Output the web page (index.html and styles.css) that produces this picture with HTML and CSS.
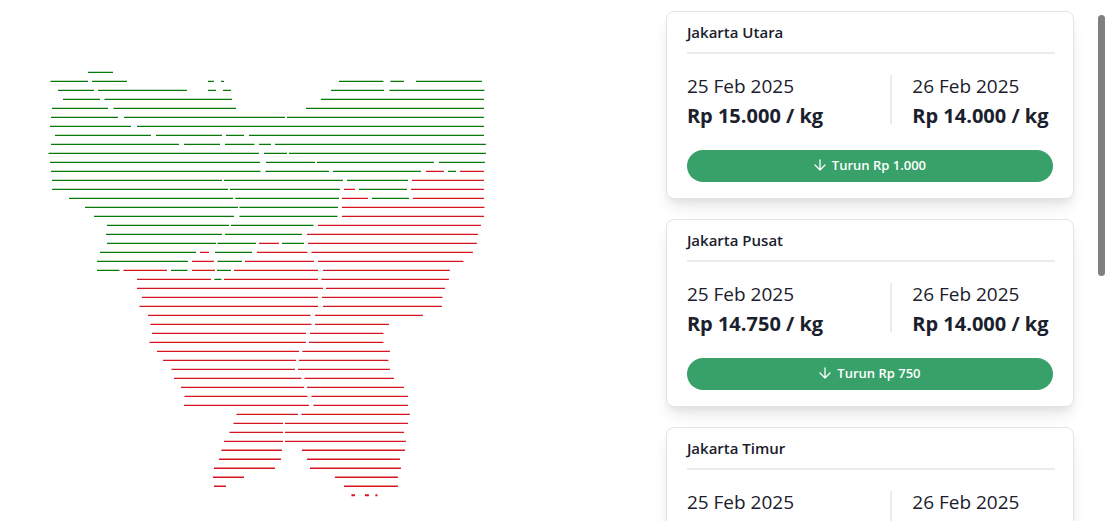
FILE: index.html
```
<!DOCTYPE html>
<html lang="id">
<head>
    <meta charset="UTF-8">
    <meta name="viewport" content="width=device-width, initial-scale=1.0">
    <title>Harga per Wilayah</title>
    <link rel="stylesheet" href="styles.css">
</head>
<body>

    <main class="page">
        <div class="map">
            <svg viewBox="0 0 666 521" role="img" aria-label="Peta Jakarta">
                <g transform="scale(1 .9997)">
                    <path class="area-down" d="M88 72.5H113
                        M50.5 81.5H88M92 81.5H127M208 81.5H214M221 81.5H224M339 81.5H383.5M390.5 81.5H404M416 81.5H482
                        M58 90.5H94M98 90.5H187M208 90.5H216M223 90.5H231M331 90.5H384M389.5 90.5H484.5
                        M63 99.5H100M104.5 99.5H232M321 99.5H484
                        M52 108.5H108M113.5 108.5H236M306 108.5H484
                        M51 117.5H118M124 117.5H285M287 117.5H484
                        M50 126.5H131M137 126.5H484
                        M55 135.5H151M156 135.5H222M226 135.5H244M249 135.5H484
                        M51 144.5H179M184 144.5H220M225 144.5H254.5M259 144.5H271M275 144.5H486
                        M48.5 153.5H259M264 153.5H287M289 153.5H486
                        M50 162.5H260M266 162.5H315M317 162.5H434M439 162.5H485
                        M51 171.5H260.5M265.5 171.5H329M333 171.5H421M448 171.5H456
                        M52 180.5H222M224 180.5H343M347 180.5H408
                        M52 189.5H228M230 189.5H340M359 189.5H407
                        M69 198.5H233M235.5 198.5H339M372 198.5H409
                        M85 207.5H238M239.5 207.5H338
                        M94 216.5H234M239.5 216.5H337.5
                        M107 225.5H229M231 225.5H313.5
                        M106 234.5H222M225 234.5H302
                        M107 243.5H216M217.5 243.5H256M282 243.5H304
                        M100 252.5H196M215 252.5H252
                        M97 261.5H188M217.5 261.5H242
                        M97 270.5H119.5M171 270.5H187.5M217 270.5H231
                        M214.5 279.5H221.5"/>
                    <path class="area-up" d="M426 171.5H444M460 171.5H484
                        M412 180.5H484
                        M344 189.5H355M411 189.5H484
                        M342 198.5H368M413 198.5H484
                        M342 207.5H484.5
                        M342 216.5H484
                        M318 225.5H481
                        M307 234.5H478
                        M259 243.5H279M308 243.5H477
                        M200 252.5H209M257 252.5H307.5M311.5 252.5H473
                        M192 261.5H214M245 261.5H314M318 261.5H463.5
                        M123.5 270.5H167M192 270.5H215M234 270.5H318M323 270.5H450
                        M137 279.5H211M224 279.5H318M321.5 279.5H449
                        M137 288.5H323M326 288.5H445
                        M142 297.5H318M322 297.5H442.5
                        M139.5 306.5H318M323 306.5H442
                        M148 315.5H310.5M315 315.5H423
                        M150.5 324.5H311.5M315 324.5H389
                        M152 333.5H306M310 333.5H383.5
                        M149.5 342.5H306M309 342.5H383.5
                        M157 351.5H299M302.5 351.5H390
                        M163 360.5H296M299 360.5H388.5
                        M171.5 369.5H295M298 369.5H390
                        M174 378.5H301.5M304.5 378.5H394
                        M181 387.5H304M307 387.5H404
                        M184.5 396.5H307.5M311.5 396.5H408
                        M184 405.5H309M313.5 405.5H408
                        M236.5 414.5H298M301.5 414.5H410
                        M233.5 423.5H283M285 423.5H408
                        M229.5 432.5H283M285 432.5H404
                        M224 441.5H283M285 441.5H406
                        M221.5 450.5H282M302 450.5H405
                        M219 459.5H281M307 459.5H400
                        M214 468.5H275M310 468.5H401
                        M213 477.5H244M335 477.5H398
                        M214 486.5H226M344 486.5H398"/>
                    <path class="area-tip" d="M351.5 495.5H355M365 495.5H369M375.5 495.5H377.5"/>
                </g>
            </svg>
        </div>

        <div class="card-list">
            <section class="card">
                <h2 class="card-title">Jakarta Utara</h2>
                <div class="prices">
                    <div class="price">
                        <p class="date">25 Feb 2025</p>
                        <p class="amount">Rp 15.000 / kg</p>
                    </div>
                    <div class="divider"></div>
                    <div class="price">
                        <p class="date">26 Feb 2025</p>
                        <p class="amount">Rp 14.000 / kg</p>
                    </div>
                </div>
                <div class="change">
                    <svg class="arrow" viewBox="0 0 12 12"><path d="M6 1V11M1 6L6 11L11 6"/></svg>
                    <span>Turun Rp 1.000</span>
                </div>
            </section>

            <section class="card">
                <h2 class="card-title">Jakarta Pusat</h2>
                <div class="prices">
                    <div class="price">
                        <p class="date">25 Feb 2025</p>
                        <p class="amount">Rp 14.750 / kg</p>
                    </div>
                    <div class="divider"></div>
                    <div class="price">
                        <p class="date">26 Feb 2025</p>
                        <p class="amount">Rp 14.000 / kg</p>
                    </div>
                </div>
                <div class="change">
                    <svg class="arrow" viewBox="0 0 12 12"><path d="M6 1V11M1 6L6 11L11 6"/></svg>
                    <span>Turun Rp 750</span>
                </div>
            </section>

            <section class="card">
                <h2 class="card-title">Jakarta Timur</h2>
                <div class="prices">
                    <div class="price">
                        <p class="date">25 Feb 2025</p>
                    </div>
                    <div class="divider"></div>
                    <div class="price">
                        <p class="date">26 Feb 2025</p>
                    </div>
                </div>
            </section>
        </div>

        <div class="scroll-track">
            <div class="scroll-thumb"></div>
        </div>
    </main>

</body>
</html>
```
FILE: styles.css
```
body {
    margin: 0;
    font-family: "Open Sans", "Noto Sans", sans-serif;
    color: #1a202c;
    background-color: #fff;
}

.page {
    display: grid;
    grid-template-columns: 62fr 38fr 44px;
    height: 100vh;
    overflow: hidden;
}

.map svg {
    display: block;
    width: 100%;
}

.map path {
    fill: none;
    stroke-width: 1.3;
}

.map .area-down {
    stroke: #087808;
}

.map .area-up {
    stroke: #d8141e;
}

.map .area-tip {
    stroke: #d8141e;
    stroke-width: 2;
}

.card-list {
    display: flex;
    flex-direction: column;
    gap: 20px;
    padding-top: 11px;
}

.card {
    box-sizing: border-box;
    flex: none;
    min-height: 188px;
    padding: 8px 18px 16px 20px;
    border: 1px solid #e2e4e8;
    border-radius: 8px;
    background-color: #fff;
    box-shadow: 0 10px 15px -3px rgba(0, 0, 0, 0.1), 0 4px 6px -2px rgba(0, 0, 0, 0.05);
}

.card-title {
    margin: 0;
    padding-bottom: 8px;
    border-bottom: 2px solid #eaebec;
    font-size: 15px;
    font-weight: 600;
    line-height: 24px;
}

.prices {
    display: grid;
    grid-template-columns: 5fr 2px 4fr;
    margin-top: 17px;
}

.divider {
    height: 49px;
    margin-top: 4px;
    background-color: #eaebec;
}

.divider + .price {
    padding-left: 20px;
}

.price p {
    margin: 0;
    line-height: 30px;
}

.date {
    font-size: 19px;
}

.amount {
    font-size: 20px;
    font-weight: 700;
}

.change {
    box-sizing: border-box;
    display: flex;
    justify-content: center;
    align-items: center;
    gap: 6px;
    height: 32px;
    margin: 19px 2px 0 0;
    padding-bottom: 2px;
    border-radius: 16px;
    background-color: #38a169;
    color: #fff;
    font-size: 13px;
    font-weight: 600;
}

.arrow {
    width: 12px;
    height: 12px;
    fill: none;
    stroke: #fff;
    stroke-width: 1.3;
    stroke-linecap: round;
    stroke-linejoin: round;
}

.scroll-track {
    padding: 15px 13px 0 24px;
}

.scroll-thumb {
    height: 50vh;
    border-radius: 4px;
    background-color: #808080;
}
```
